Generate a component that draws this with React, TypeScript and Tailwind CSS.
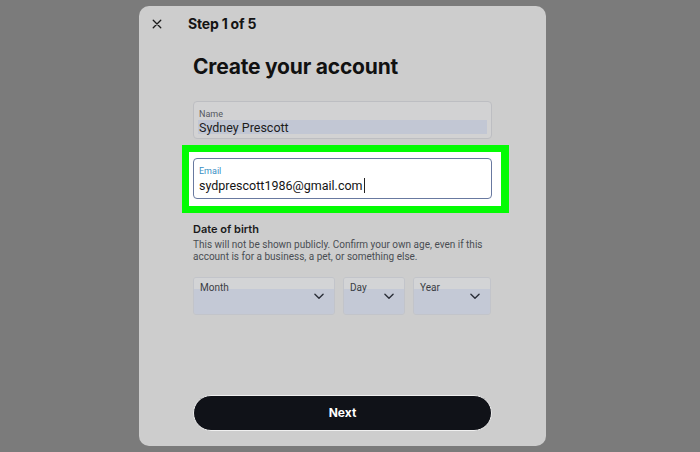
import React from "react";

function Chevron() {
  return (
    <svg width="14" height="14" viewBox="0 0 24 24" fill="none" stroke="#2b2f38" strokeWidth="2.4" strokeLinecap="round" strokeLinejoin="round">
      <path d="M5 9l7 7 7-7" />
    </svg>
  );
}

function Select({ label, width }: { label: string; width: string }) {
  return (
    <div className={`${width} h-[38px] flex flex-col rounded-[3px] border border-[#c2c4ca] overflow-hidden`}>
      <div className="h-[11px] bg-[#d3d4d6]" />
      <div className="flex-1 bg-[#c4c9d6] flex justify-between px-[6px]">
        <span className="text-[10px] text-[#3a3d44] leading-none -mt-[6px] font-[Roboto]">{label}</span>
        <span className="mt-0 mr-[2px]">
          <Chevron />
        </span>
      </div>
    </div>
  );
}

export default function App() {
  return (
    <div
      className="w-[700px] h-[452px] bg-[#7b7b7b] flex pl-[139px] pt-[6px] overflow-hidden"
      style={{ fontFamily: "Inter, 'Noto Sans', sans-serif" }}
    >
      <div className="w-[407px] h-[440px] bg-[#cdcdcd] rounded-[10px] flex flex-col">
        {/* header */}
        <div className="h-[34px] flex items-center pt-[1px]">
          <span className="w-[34px] flex justify-center pl-[2px] text-[#1a1a1a]">
            <svg width="10" height="10" viewBox="0 0 12 12" stroke="#1a1a1a" strokeWidth="1.6" strokeLinecap="round">
              <path d="M1.5 1.5l9 9M10.5 1.5l-9 9" />
            </svg>
          </span>
          <span className="ml-[15px] text-[14px] font-bold text-[#141414] tracking-[-0.2px]">Step 1 of 5</span>
        </div>

        <div className="pl-[54px] pr-[54px] flex flex-col">
          <h1 className="mt-[13px] text-[21px] font-bold text-[#111] leading-[28px] tracking-[-0.2px]">Create your account</h1>

          {/* name */}
          <div className="mt-[20px] h-[38px] rounded-[4px] border border-[#bdbec2] bg-[#d2d2d3] px-[4px] pt-[6px]">
            <div className="text-[9px] text-[#55585f] leading-[12px] pl-[1px] font-[Roboto]">Name</div>
            <div className="h-[14px] bg-[#c2c7d4] text-[12.5px] text-[#1c1c1c] leading-[15px] pl-[1px] font-[Roboto]">Sydney Prescott</div>
          </div>
        </div>

        {/* email highlight */}
        <div className="ml-[43px] mt-[6px] w-[327px] h-[68px] bg-[#03fc03] p-[7px] pr-[8px]">
          <div className="h-full bg-white pl-[4px] pr-[9px] pt-[6px] pb-[7px]">
            <div className="h-full rounded-[4px] border border-[#6879a0] px-[5px] pt-[6px] font-[Roboto]">
              <div className="text-[9px] text-[#3b8fc4] leading-[12px]">Email</div>
              <div className="text-[12.5px] text-[#141414] leading-[17px] flex items-center">
                sydprescott1986@gmail.com
                <span className="inline-block w-[1px] h-[15px] bg-[#222] ml-[1px]" />
              </div>
            </div>
          </div>
        </div>

        <div className="pl-[54px] pr-[54px] flex flex-col">
          <div className="mt-[9px] text-[11px] font-semibold text-[#1a1a1a] leading-[14px]">Date of birth</div>
          <div className="mt-[3px] text-[10px] text-[#4a4d53] leading-[12px] pr-[4px] font-[Roboto]">
            This will not be shown publicly. Confirm your own age, even if this account is for a business, a pet, or something else.
          </div>

          <div className="mt-[14px] flex gap-[8px]">
            <Select label="Month" width="w-[142px]" />
            <Select label="Day" width="w-[62px]" />
            <Select label="Year" width="w-[78px]" />
          </div>

          <button className="mt-[80px] h-[36px] w-full rounded-full bg-[#101218] border border-[#f0f0f0] text-white text-[12px] font-bold">
            Next
          </button>
        </div>
      </div>
    </div>
  );
}
